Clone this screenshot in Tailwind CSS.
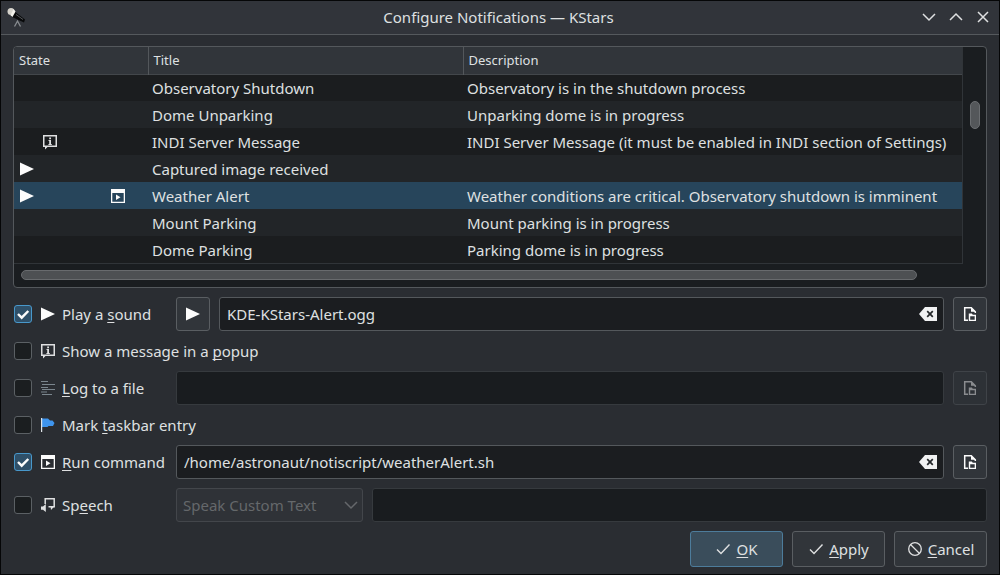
<!DOCTYPE html>
<html lang="en">
<head>
<meta charset="utf-8">
<meta name="viewport" content="width=device-width, initial-scale=1">
<title>Configure Notifications — KStars</title>
<script src="https://cdn.jsdelivr.net/npm/@tailwindcss/browser@4"></script>
</head>
<body class="min-h-screen bg-[#050607] p-px font-['Noto_Sans',sans-serif] text-[15px] leading-5 text-[#dfe0e1] [&_u]:underline-offset-2 [&_u]:[text-decoration-skip-ink:none]">

<svg class="hidden" aria-hidden="true">
  <symbol id="i-play" viewBox="0 0 16 16"><path d="M1 1.500v13L15 8z" fill="currentColor"/></symbol>
  <symbol id="i-info" viewBox="0 0 16 16"><path d="M1 1h14v12H5.500L3 15.500V13H1zM2.500 2.500v9h11v-9z" fill="currentColor" fill-rule="evenodd"/><path d="M7.200 3.500h1.800v1.700H7.200zM6.500 6h2.500v4h.8v1H6.400v-1h.8V7h-.7z" fill="currentColor"/></symbol>
  <symbol id="i-run" viewBox="0 0 16 16"><path d="M1 1h14v14H1zM2.300 5v8.700h11.400V5z" fill="currentColor" fill-rule="evenodd"/><path d="M6 6.500v5.500l4.500-2.750z" fill="currentColor"/></symbol>
  <symbol id="i-log" viewBox="0 0 16 16"><path d="M1 1.500h7M2 4.500h13M1 7.500h7M2 9.500h13M1 12h6M2 14.500h10" stroke="currentColor" stroke-width="1" fill="none"/></symbol>
  <symbol id="i-flag" viewBox="0 0 16 16"><path d="M1 1.500h7L10 3.500h2.500L14.500 6 13 9H8.500L7.500 10H1z" fill="#3f95ee"/><path d="M1 1h1.200v14H1z" fill="#dfe5ea"/></symbol>
  <symbol id="i-speech" viewBox="0 0 16 16"><path d="M5.200 7V1.800h9v8H8.500" fill="none" stroke="currentColor" stroke-width="1.500"/><path d="M5.800 7v8L3 12.800H1V9.500h2zM10.500 9h4.300l-3.800 4z" fill="currentColor"/></symbol>
  <symbol id="i-file" viewBox="0 0 16 16"><path d="M6 14.300H2.700V1.700h6.600l4 4V7" fill="none" stroke="currentColor" stroke-width="1.500"/><path d="M9 1.500v4.300h4.500z" fill="currentColor"/><path d="M6.800 7.500h3l1 1.200H14V15H6.800zM8.200 10.300v3.400h4.500v-3.400z" fill="currentColor" fill-rule="evenodd"/></symbol>
  <symbol id="i-clear" viewBox="0 0 18 14"><path d="M6 0h12v14H6L0 7z" fill="#f0f1f2"/><path d="m8.200 4.200 5.600 5.600m0-5.600L8.200 9.800" stroke="#232629" stroke-width="1.700"/></symbol>
  <symbol id="i-tick" viewBox="0 0 16 16"><path d="m2 8.500 4 4L14.500 3.500" fill="none" stroke="currentColor" stroke-width="1.400"/></symbol>
  <symbol id="i-box" viewBox="0 0 18 18"><path d="m4 9 3.700 3.700L14.300 6" fill="none" stroke="#fcfcfc" stroke-width="2.400"/></symbol>
  <symbol id="i-cancel" viewBox="0 0 16 16"><g fill="none" stroke="currentColor" stroke-width="1.300"><circle cx="8" cy="8" r="6.300"/><path d="m3.500 3.500 9 9"/></g></symbol>
  <symbol id="i-down" viewBox="0 0 16 16"><path d="m2 5 6 6 6-6" fill="none" stroke="currentColor" stroke-width="1.500"/></symbol>
</svg>

<div class="flex min-h-[calc(100vh-2px)] flex-col bg-[#2a2d32]">
  <header class="grid h-[34px] grid-cols-[1fr_auto_1fr] items-center border-b border-[#55595d] bg-[#31343a] pr-2 pb-px pl-[5px]">
    <svg class="size-5" viewBox="0 0 20 20" aria-hidden="true">
      <path d="m8.500 19.500 3-5.500 3 5.500" stroke="#888c90" stroke-width="1.300" fill="none"/>
      <path d="m8 4 11 8.500-1 3L5 9.500z" fill="#08090a"/>
      <path d="M10 7.500 17 12.500" stroke="#55585b" stroke-width="1"/>
      <ellipse cx="5" cy="4.500" rx="3.500" ry="3.600" fill="#d5d3cc"/><path d="M4.500 8.500 7.500 2l2 2.500-3 5.500z" fill="#f1f0ea"/>
    </svg>
    <h1>Configure Notifications — KStars</h1>
    <div class="flex justify-end gap-[11px]">
      <button type="button" aria-label="Minimize" class="size-4"><svg class="size-4"><use href="#i-down"/></svg></button>
      <button type="button" aria-label="Maximize" class="size-4"><svg class="size-4 rotate-180"><use href="#i-down"/></svg></button>
      <button type="button" aria-label="Close" class="size-4"><svg class="size-4" viewBox="0 0 16 16"><path d="m3 3 10 10M13 3 3 13" stroke="currentColor" stroke-width="1.500"/></svg></button>
    </div>
  </header>

  <main class="flex flex-1 flex-col px-3 pt-[11px] pb-[6px]">
    <section class="grid grid-cols-[1fr_23px] overflow-hidden rounded-sm border border-[#54585c] bg-[#1a1d20]">
      <div class="border-r border-b border-[#303438]">
        <table class="w-full table-fixed border-collapse text-left">
          <thead>
            <tr class="h-[27px] border-b border-[#43474b] bg-[#31353a] text-[13px]">
              <th class="w-[134px] border-r border-[#53575b] px-[5px] font-normal">State</th>
              <th class="w-[315px] border-r border-[#53575b] px-[5px] font-normal">Title</th>
              <th class="px-[5px] font-normal">Description</th>
            </tr>
          </thead>
          <tbody class="[&>tr]:h-[27px] [&>tr:nth-child(odd)]:bg-[#1b1d1f] [&>tr:nth-child(even)]:bg-[#222528] [&_td]:whitespace-nowrap">
            <tr><td></td><td class="px-1">Observatory Shutdown</td><td class="px-1">Observatory is in the shutdown process</td></tr>
            <tr><td></td><td class="px-1">Dome Unparking</td><td class="px-1">Unparking dome is in progress</td></tr>
            <tr><td class="pl-7"><svg class="size-4" role="img" aria-label="Popup"><use href="#i-info"/></svg></td><td class="px-1">INDI Server Message</td><td class="px-1">INDI Server Message (it must be enabled in INDI section of Settings)</td></tr>
            <tr><td class="pl-[5px]"><svg class="size-4 text-[#fcfcfc]" role="img" aria-label="Sound"><use href="#i-play"/></svg></td><td class="px-1">Captured image received</td><td></td></tr>
            <tr class="bg-[#27455b]!" aria-selected="true"><td class="pl-[5px]"><div class="flex gap-[75px] text-[#fcfcfc]"><svg class="size-4" role="img" aria-label="Sound"><use href="#i-play"/></svg><svg class="size-4" role="img" aria-label="Command"><use href="#i-run"/></svg></div></td><td class="px-1">Weather Alert</td><td class="px-1">Weather conditions are critical. Observatory shutdown is imminent</td></tr>
            <tr><td></td><td class="px-1">Mount Parking</td><td class="px-1">Mount parking is in progress</td></tr>
            <tr><td></td><td class="px-1">Dome Parking</td><td class="px-1">Parking dome is in progress</td></tr>
          </tbody>
        </table>
      </div>
      <div class="flex justify-center pt-[54px]"><div class="h-7 w-[10px] rounded-full border border-[#6b6e71] bg-[#54575a]"></div></div>
      <div class="col-span-2 h-[23px] px-[7px] pt-[6px]"><div class="h-[10px] w-[93.5%] rounded-full border border-[#686b6e] bg-[#4d5053]"></div></div>
    </section>

    <form class="mt-[9px] flex flex-1 flex-col gap-[7px]">
      <div class="flex h-[34px] items-center">
        <label class="flex w-[163px] items-center"><span class="grid size-5 place-items-center"><input type="checkbox" checked class="col-start-1 row-start-1 size-[18px] appearance-none rounded-[3px] border border-[#5b6064] bg-[#1b1e20] checked:border-[#4898cb] checked:bg-[#2f5069]"><svg class="pointer-events-none col-start-1 row-start-1 size-[18px]"><use href="#i-box"/></svg></span><svg class="mr-[6px] ml-[7px] size-4 text-[#fcfcfc]"><use href="#i-play"/></svg><span>Play a <u>s</u>ound</span></label>
        <button type="button" aria-label="Test sound" class="mr-[9px] grid size-[34px] place-items-center rounded-[3px] border border-[#5a5e62] bg-[#31353a] text-[#fcfcfc]"><svg class="size-4"><use href="#i-play"/></svg></button>
        <div class="mr-[9px] flex h-full min-w-0 flex-1 items-center rounded-[3px] border border-[#54585c] bg-[#1b1d20] px-[6px]"><input type="text" aria-label="Sound file" value="KDE-KStars-Alert.ogg" class="min-w-0 flex-1 bg-transparent px-px outline-none"><button type="button" aria-label="Clear sound file"><svg class="h-[14px] w-[18px]"><use href="#i-clear"/></svg></button></div>
        <button type="button" aria-label="Choose sound file" class="grid size-[34px] place-items-center rounded-[3px] border border-[#5a5e62] bg-[#31353a] text-[#fcfcfc]"><svg class="size-4"><use href="#i-file"/></svg></button>
      </div>

      <div class="flex h-[26px] items-center">
        <label class="flex items-center"><span class="grid size-5 place-items-center"><input type="checkbox" class="size-[18px] appearance-none rounded-[3px] border border-[#5b6064] bg-[#1b1e20]"></span><svg class="mr-[6px] ml-[7px] size-4"><use href="#i-info"/></svg><span>Show a message in a <u>p</u>opup</span></label>
      </div>

      <div class="flex h-[34px] items-center">
        <label class="flex w-[163px] items-center"><span class="grid size-5 place-items-center"><input type="checkbox" class="size-[18px] appearance-none rounded-[3px] border border-[#5b6064] bg-[#1b1e20]"></span><svg class="mr-[6px] ml-[7px] size-4 text-[#7b868e]"><use href="#i-log"/></svg><span><u>L</u>og to a file</span></label>
        <input type="text" aria-label="Log file" disabled class="mr-[9px] h-full min-w-0 flex-1 rounded-[3px] border border-[#363a3e] bg-[#191c1f] px-[7px]">
        <button type="button" disabled aria-label="Choose log file" class="grid size-[34px] place-items-center rounded-[3px] border border-[#3f4348] bg-[#2d3136] text-[#8a8c8f]"><svg class="size-4"><use href="#i-file"/></svg></button>
      </div>

      <div class="flex h-[26px] items-center">
        <label class="flex items-center"><span class="grid size-5 place-items-center"><input type="checkbox" class="size-[18px] appearance-none rounded-[3px] border border-[#5b6064] bg-[#1b1e20]"></span><svg class="mr-[6px] ml-[7px] size-4"><use href="#i-flag"/></svg><span>Mark <u>t</u>askbar entry</span></label>
      </div>

      <div class="flex h-[34px] items-center">
        <label class="flex w-[163px] items-center"><span class="grid size-5 place-items-center"><input type="checkbox" checked class="col-start-1 row-start-1 size-[18px] appearance-none rounded-[3px] border border-[#5b6064] bg-[#1b1e20] checked:border-[#4898cb] checked:bg-[#2f5069]"><svg class="pointer-events-none col-start-1 row-start-1 size-[18px]"><use href="#i-box"/></svg></span><svg class="mr-[6px] ml-[7px] size-4 text-[#fcfcfc]"><use href="#i-run"/></svg><span><u>R</u>un command</span></label>
        <div class="mr-[9px] flex h-full min-w-0 flex-1 items-center rounded-[3px] border border-[#54585c] bg-[#1b1d20] px-[6px]"><input type="text" aria-label="Command" value="/home/astronaut/notiscript/weatherAlert.sh" class="min-w-0 flex-1 bg-transparent px-px outline-none"><button type="button" aria-label="Clear command"><svg class="h-[14px] w-[18px]"><use href="#i-clear"/></svg></button></div>
        <button type="button" aria-label="Choose command" class="grid size-[34px] place-items-center rounded-[3px] border border-[#5a5e62] bg-[#31353a] text-[#fcfcfc]"><svg class="size-4"><use href="#i-file"/></svg></button>
      </div>

      <div class="mt-[2px] flex h-[34px] items-center">
        <label class="flex w-[163px] items-center"><span class="grid size-5 place-items-center"><input type="checkbox" class="size-[18px] appearance-none rounded-[3px] border border-[#5b6064] bg-[#1b1e20]"></span><svg class="mr-[6px] ml-[7px] size-4"><use href="#i-speech"/></svg><span>Sp<u>e</u>ech</span></label>
        <div class="mr-[9px] grid h-full w-[187px] items-center text-[#65686b]">
          <select disabled aria-label="Speech type" class="col-start-1 row-start-1 size-full appearance-none rounded-[3px] border border-[#43464b] bg-[#2f3237] px-[6px] opacity-100"><option>Speak Custom Text</option></select>
          <svg class="pointer-events-none col-start-1 row-start-1 mr-1 size-4 justify-self-end"><use href="#i-down"/></svg>
        </div>
        <input type="text" aria-label="Custom speech text" disabled class="h-full min-w-0 flex-1 rounded-[3px] border border-[#363a3e] bg-[#191c1f] px-[7px]">
      </div>

      <div class="mt-[2px] flex justify-end gap-[9px]">
        <button type="submit" class="flex h-9 w-[93px] items-center justify-center gap-[5px] rounded-[3px] border border-[#4d7c9b] bg-[#3a4d5b]"><svg class="size-4"><use href="#i-tick"/></svg><span><u>O</u>K</span></button>
        <button type="button" class="flex h-9 w-[93px] items-center justify-center gap-[5px] rounded-[3px] border border-[#5a5e62] bg-[#31353a]"><svg class="size-4"><use href="#i-tick"/></svg><span><u>A</u>pply</span></button>
        <button type="button" class="flex h-9 w-[93px] items-center justify-center gap-[5px] rounded-[3px] border border-[#5a5e62] bg-[#31353a]"><svg class="size-4"><use href="#i-cancel"/></svg><span><u>C</u>ancel</span></button>
      </div>
    </form>
  </main>
</div>
</body>
</html>
